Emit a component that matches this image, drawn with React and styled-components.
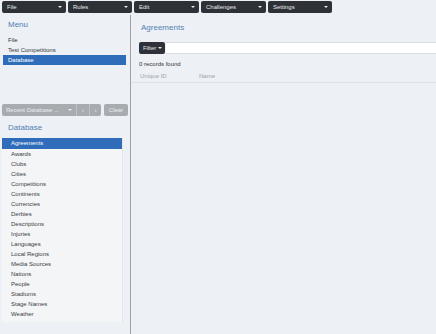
import React from "react";
import styled, { createGlobalStyle } from "styled-components";

const GlobalStyle = createGlobalStyle`
  html, body {
    margin: 0;
    padding: 0;
    background: #edf0f4;
    font-family: "Liberation Sans", Arial, sans-serif;
  }
  #root {
    width: 436px;
    height: 334px;
    overflow: hidden;
  }
`;

const Page = styled.div`
  display: flex;
  flex-direction: column;
  width: 436px;
  height: 334px;
  background: #edf0f4;
`;

const Toolbar = styled.div`
  display: flex;
  gap: 2px;
  height: 15px;
  padding: 1px 0 0 2px;
  box-sizing: border-box;
`;

const MenuButton = styled.div`
  display: flex;
  align-items: center;
  justify-content: space-between;
  width: ${(p) => p.$w || 64}px;
  height: 12px;
  padding: 0 4px 0 5px;
  box-sizing: border-box;
  background: #2e3137;
  border-radius: 2px;
  color: #e8e9eb;
  font-size: 6px;
`;

const Caret = styled.span`
  width: 0;
  height: 0;
  border-left: 2px solid transparent;
  border-right: 2px solid transparent;
  border-top: 2px solid ${(p) => p.$color || "#e8e9eb"};
`;

const Body = styled.div`
  display: flex;
  flex: 1;
  min-height: 0;
`;

const Sidebar = styled.div`
  display: flex;
  flex-direction: column;
  width: 130px;
  border-right: 1px solid #9fa3a9;
  padding-top: 4px;
`;

const SectionTitle = styled.div`
  height: 12px;
  line-height: 12px;
  padding-left: ${(p) => p.$indent || 8}px;
  font-size: 8px;
  color: #4f80b3;
`;

const MenuList = styled.div`
  display: flex;
  flex-direction: column;
  margin: 4px 4px 0 3px;
`;

const MenuItem = styled.div`
  height: 10px;
  line-height: 10px;
  padding-left: 5px;
  font-size: 6px;
  color: ${(p) => (p.$active ? "#ffffff" : "#33363b")};
  background: ${(p) => (p.$active ? "#2f6dbb" : "transparent")};
`;

const RecentRow = styled.div`
  display: flex;
  gap: 3px;
  margin: 39px 2px 0 2px;
  height: 12px;
`;

const RecentGroup = styled.div`
  display: flex;
  width: 99px;
  border-radius: 2px;
  overflow: hidden;
  background: #a8abb0;
`;

const RecentSegment = styled.div`
  display: flex;
  align-items: center;
  justify-content: ${(p) => (p.$main ? "space-between" : "center")};
  width: ${(p) => p.$w}px;
  padding: ${(p) => (p.$main ? "0 4px 0 4px" : "0")};
  box-sizing: border-box;
  border-left: ${(p) => (p.$main ? "none" : "1px solid #bfc2c6")};
  color: #eceef0;
  font-size: 6px;
`;

const ClearButton = styled.div`
  display: flex;
  align-items: center;
  justify-content: center;
  width: 24px;
  border-radius: 2px;
  background: #a8abb0;
  color: #eceef0;
  font-size: 6px;
`;

const DbTitle = styled(SectionTitle)`
  margin-top: 6px;
`;

const DbList = styled.div`
  display: flex;
  flex-direction: column;
  width: 120px;
  margin: 4px 0 0 2px;
  padding-bottom: 3px;
  background: #f4f5f7;
  border-right: 1px solid #e3e5e9;
`;

const DbItem = styled.div`
  height: ${(p) => (p.$active ? 11 : 10)}px;
  line-height: ${(p) => (p.$active ? 11 : 10)}px;
  padding-left: 9px;
  font-size: 6px;
  color: ${(p) => (p.$active ? "#ffffff" : "#3a3d42")};
  background: ${(p) => (p.$active ? "#2f6dbb" : "transparent")};
`;

const Content = styled.div`
  display: flex;
  flex-direction: column;
  flex: 1;
  padding-top: 7px;
`;

const ContentTitle = styled.div`
  height: 12px;
  line-height: 12px;
  padding-left: 10px;
  font-size: 8px;
  color: #4f80b3;
`;

const FilterRow = styled.div`
  display: flex;
  align-items: center;
  height: 12px;
  margin-top: 8px;
  padding-left: 8px;
`;

const FilterButton = styled.div`
  display: flex;
  align-items: center;
  gap: 2px;
  width: 26px;
  height: 12px;
  padding-left: 4px;
  box-sizing: border-box;
  background: #2e3137;
  border-radius: 2px;
  color: #e8e9eb;
  font-size: 6px;
`;

const FilterInput = styled.div`
  flex: 1;
  height: 10px;
  margin-left: 1px;
  background: #ffffff;
  border-top: 1px solid #d9dce2;
  border-bottom: 1px solid #d9dce2;
`;

const Count = styled.div`
  height: 10px;
  line-height: 10px;
  margin-top: 5px;
  padding-left: 8px;
  font-size: 6px;
  color: #33363b;
`;

const TableHead = styled.div`
  display: grid;
  grid-template-columns: 59px 1fr;
  height: 11px;
  line-height: 11px;
  margin-top: 2px;
  padding-left: 9px;
  border-bottom: 1px solid #dfe2e7;
  font-size: 6px;
  color: #9ea2a9;
`;

const topMenus = [
  { label: "File", w: 64 },
  { label: "Rules", w: 64 },
  { label: "Edit", w: 65 },
  { label: "Challenges", w: 65 },
  { label: "Settings", w: 64 },
];

const tables = [
  "Agreements",
  "Awards",
  "Clubs",
  "Cities",
  "Competitions",
  "Continents",
  "Currencies",
  "Derbies",
  "Descriptions",
  "Injuries",
  "Languages",
  "Local Regions",
  "Media Sources",
  "Nations",
  "People",
  "Stadiums",
  "Stage Names",
  "Weather",
];

export default function App() {
  return (
    <Page>
      <GlobalStyle />
      <Toolbar>
        {topMenus.map((m) => (
          <MenuButton key={m.label} $w={m.w}>
            <span>{m.label}</span>
            <Caret />
          </MenuButton>
        ))}
      </Toolbar>
      <Body>
        <Sidebar>
          <SectionTitle>Menu</SectionTitle>
          <MenuList>
            <MenuItem>File</MenuItem>
            <MenuItem>Test Competitions</MenuItem>
            <MenuItem $active>Database</MenuItem>
          </MenuList>
          <RecentRow>
            <RecentGroup>
              <RecentSegment $main $w={74}>
                <span>Recent Database ...</span>
                <Caret $color="#eceef0" />
              </RecentSegment>
              <RecentSegment $w={13}>‹</RecentSegment>
              <RecentSegment $w={12}>›</RecentSegment>
            </RecentGroup>
            <ClearButton>Clear</ClearButton>
          </RecentRow>
          <DbTitle $indent={8}>Database</DbTitle>
          <DbList>
            {tables.map((t, i) => (
              <DbItem key={t} $active={i === 0}>
                {t}
              </DbItem>
            ))}
          </DbList>
        </Sidebar>
        <Content>
          <ContentTitle>Agreements</ContentTitle>
          <FilterRow>
            <FilterButton>
              <span>Filter</span>
              <Caret />
            </FilterButton>
            <FilterInput />
          </FilterRow>
          <Count>0 records found</Count>
          <TableHead>
            <span>Unique ID</span>
            <span>Name</span>
          </TableHead>
        </Content>
      </Body>
    </Page>
  );
}
